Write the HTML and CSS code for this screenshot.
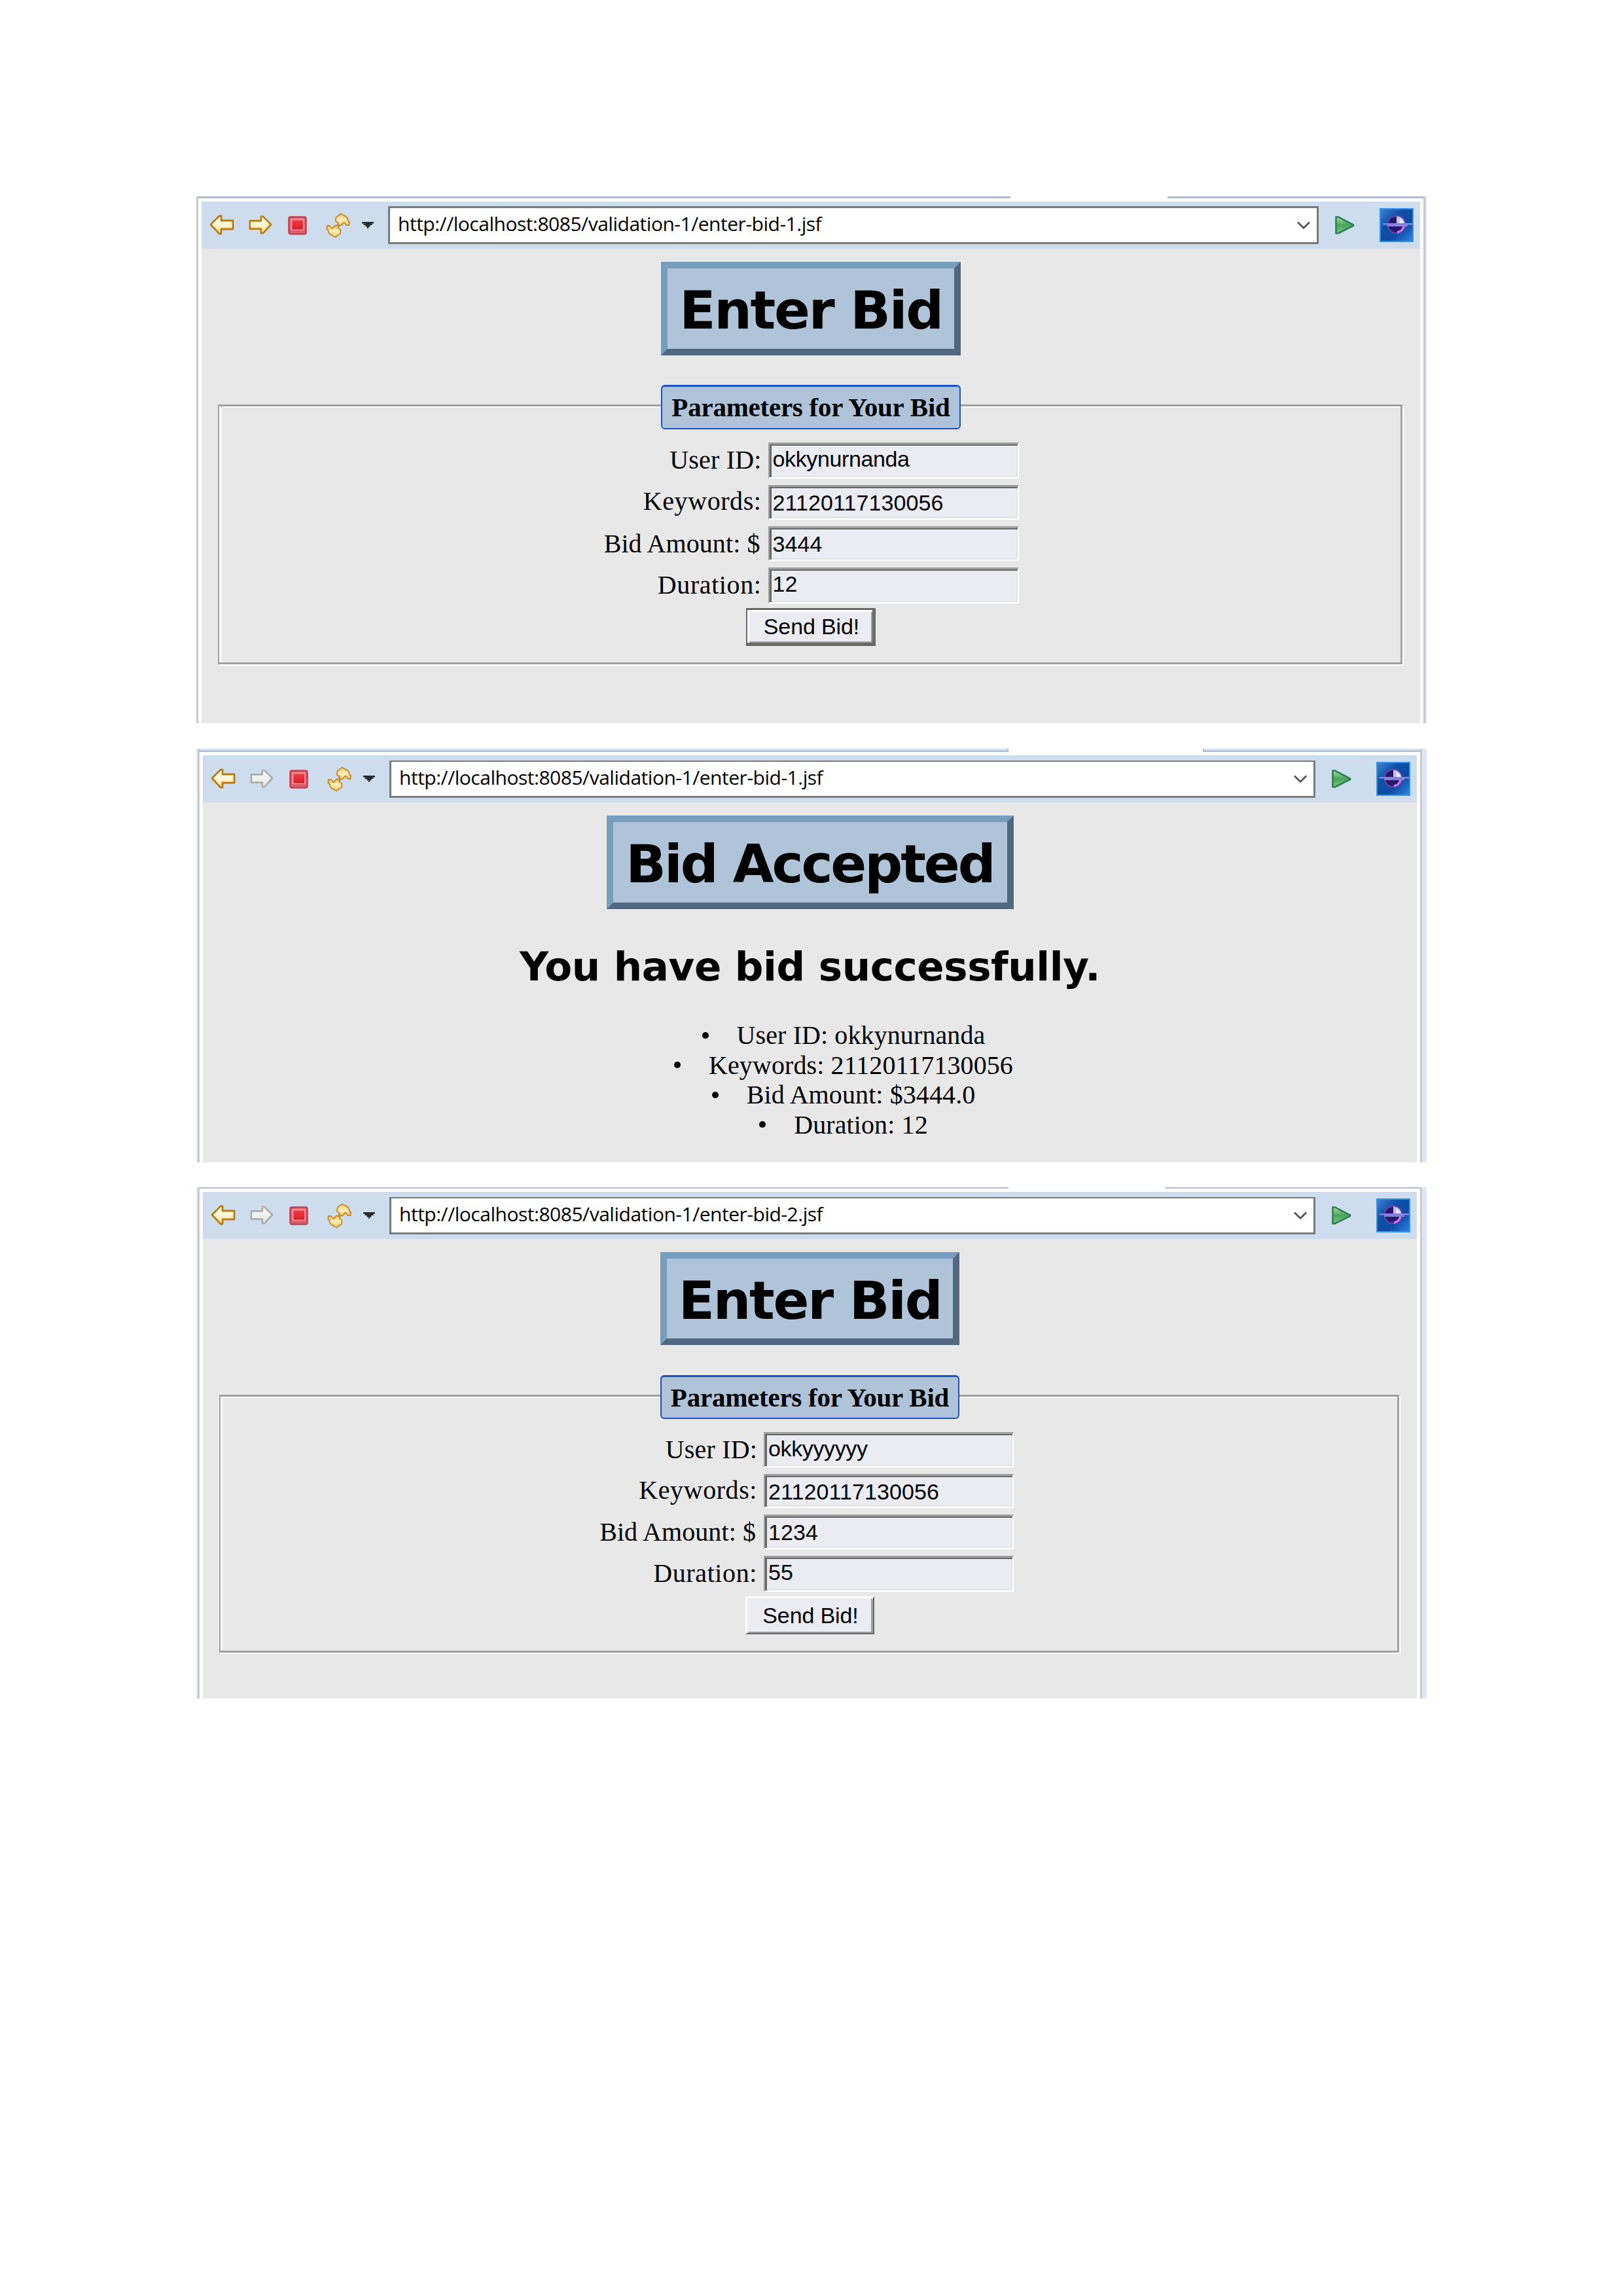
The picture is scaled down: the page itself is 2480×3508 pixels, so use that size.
FILE: index.html
```html
<!DOCTYPE html>
<html lang="en">
<head>
<meta charset="utf-8">
<title>Enter Bid</title>
<link rel="stylesheet" href="styles.css">
</head>
<body>
<svg class="sprite" aria-hidden="true">
  <defs>
    <linearGradient id="gold" x1="0" y1="0" x2="0" y2="1"><stop offset="0" stop-color="#fffef2"/><stop offset=".5" stop-color="#fff6d4"/><stop offset="1" stop-color="#fbe08c"/></linearGradient>
    <linearGradient id="swirl" x1="0" y1="0" x2="0" y2="1"><stop offset="0" stop-color="#f5cf7a"/><stop offset=".6" stop-color="#fdeebf"/><stop offset="1" stop-color="#f3bb45"/></linearGradient>
    <linearGradient id="gray" x1="0" y1="0" x2="0" y2="1"><stop offset="0" stop-color="#fdfdfd"/><stop offset="1" stop-color="#e4e4e4"/></linearGradient>
    <linearGradient id="red" x1="0" y1="0" x2="0" y2="1"><stop offset="0" stop-color="#ee3a40"/><stop offset=".6" stop-color="#e62a33"/><stop offset="1" stop-color="#c91f2a"/></linearGradient>
    <linearGradient id="green" x1="0" y1="0" x2="0" y2="1"><stop offset="0" stop-color="#b5dc8c"/><stop offset=".5" stop-color="#45a560"/><stop offset="1" stop-color="#7cc873"/></linearGradient>
    <linearGradient id="sky" x1="0" y1="0" x2="1" y2="1"><stop offset="0" stop-color="#3f7fd8"/><stop offset=".35" stop-color="#0f4fa8"/><stop offset=".65" stop-color="#0d4ca4"/><stop offset="1" stop-color="#2f82e0"/></linearGradient>
  </defs>
  <symbol id="back" viewBox="0 0 38 31"><path d="M2 15 15 2H18V9H36V22H18V29H15Z" fill="url(#gold)" stroke="#b97c12" stroke-width="2.8" stroke-linejoin="round"/></symbol>
  <symbol id="forward" viewBox="0 0 38 31"><path d="M36 15 23 2H20V9H2V22H20V29H23Z" fill="url(#gold)" stroke="#b97c12" stroke-width="2.8" stroke-linejoin="round"/></symbol>
  <symbol id="forward-off" viewBox="0 0 38 31"><path d="M36 15 23 2H20V9H2V22H20V29H23Z" fill="url(#gray)" stroke="#adadad" stroke-width="2.8" stroke-linejoin="round"/></symbol>
  <symbol id="stop" viewBox="0 0 29 29"><rect x="1.5" y="1.5" width="26" height="26" rx="2.5" fill="#d9606c" stroke="#bf4454" stroke-width="2.6"/><rect x="4" y="4" width="21" height="18" fill="#f18e94"/><rect x="6.500" y="6.500" width="16.500" height="14" fill="url(#red)"/></symbol>
  <symbol id="refresh" viewBox="0 0 38 39"><path d="M23 1.500 27 4C32 5.500 34 9 34 13L36 14 35.500 19 31.500 19 28 14.500 23 19.500 17.500 19 19 15.500 15 13 15.500 7 20 4Z" fill="url(#swirl)" stroke="#c68d2b" stroke-width="2" stroke-linejoin="round"/><path d="M23 1.500 27 4C32 5.500 34 9 34 13L36 14 35.500 19 31.500 19 28 14.500 23 19.500 17.500 19 19 15.500 15 13 15.500 7 20 4Z" transform="rotate(180 18.700 19.500)" fill="url(#swirl)" stroke="#c68d2b" stroke-width="2" stroke-linejoin="round"/></symbol>
  <symbol id="caret" viewBox="0 0 18 10"><path d="M0 0H18V2.500H15.500V5H12.500V7.500H10V10H8V7.500H5.500V5H2.500V2.500H0Z" fill="#2b2b2b"/></symbol>
  <symbol id="chevron" viewBox="0 0 20 13"><path d="M1 1.500 10 10.500 19 1.500" fill="none" stroke="#505050" stroke-width="2.6"/></symbol>
  <symbol id="play" viewBox="0 0 30 28"><path d="M1.500 1.500H5L28 13.500V15L5 26.500H1.500Z" fill="url(#green)" stroke="#2b8058" stroke-width="2.6"/></symbol>
  <symbol id="globe" viewBox="0 0 52 52"><rect width="52" height="52" fill="#2f95e4"/><rect x="2" y="2" width="48" height="48" fill="url(#sky)"/><circle cx="26" cy="25" r="14.500" fill="#5a4aa8"/><circle cx="25.500" cy="25" r="12" fill="#28166c"/><path d="M26 12.500A12.500 12.500 0 0 1 38.500 25H26Z" fill="#c3bfe6"/><path d="M31 15A12 12 0 0 1 37 24H31Z" fill="#eceaf6"/><path d="M37 27A12 12 0 0 1 27 37" fill="none" stroke="#cc74e8" stroke-width="3.500"/><path d="M5 23H50V25.500H43V28H12V25.500H5Z" fill="#8683dd"/></symbol>
</svg>

<main class="sheet">
  <div class="shot shot-a">
    <section class="browser">
      <div class="edge"><i class="edge-left"></i><i class="edge-right"></i></div>
      <nav class="toolbar">
        <svg class="ic back"><use href="#back"/></svg>
        <svg class="ic forward"><use href="#forward"/></svg>
        <svg class="ic stop"><use href="#stop"/></svg>
        <svg class="ic refresh"><use href="#refresh"/></svg>
        <svg class="ic caret"><use href="#caret"/></svg>
        <div class="url"><span class="address">http://localhost:8085/validation-1/enter-bid-1.jsf</span><svg class="chevron"><use href="#chevron"/></svg></div>
        <svg class="ic play"><use href="#play"/></svg>
        <svg class="ic globe"><use href="#globe"/></svg>
      </nav>
      <div class="content">
        <h1 class="title title-enter">Enter Bid</h1>
        <div class="group">
          <div class="legend">Parameters for Your Bid</div>
          <div class="form">
            <span class="label l-user">User ID:</span><span class="field first">okkynurnanda</span>
            <span class="label l-key">Keywords:</span><span class="field">21120117130056</span>
            <span class="label l-bid">Bid Amount: $</span><span class="field">3444</span>
            <span class="label l-dur">Duration:</span><span class="field last">12</span>
          </div>
          <div class="send send-active">Send Bid!</div>
        </div>
      </div>
    </section>
  </div>

  <div class="shot shot-b">
    <section class="browser">
      <div class="edge"><i class="edge-left"></i><i class="edge-right"></i></div>
      <nav class="toolbar">
        <svg class="ic back"><use href="#back"/></svg>
        <svg class="ic forward"><use href="#forward-off"/></svg>
        <svg class="ic stop"><use href="#stop"/></svg>
        <svg class="ic refresh"><use href="#refresh"/></svg>
        <svg class="ic caret"><use href="#caret"/></svg>
        <div class="url"><span class="address">http://localhost:8085/validation-1/enter-bid-1.jsf</span><svg class="chevron"><use href="#chevron"/></svg></div>
        <svg class="ic play"><use href="#play"/></svg>
        <svg class="ic globe"><use href="#globe"/></svg>
      </nav>
      <div class="content">
        <h1 class="title title-accepted">Bid Accepted</h1>
        <h2 class="message">You have bid successfully.</h2>
        <ul class="summary">
          <li><i class="dot"></i>User ID: okkynurnanda</li>
          <li><i class="dot"></i>Keywords: 21120117130056</li>
          <li><i class="dot"></i>Bid Amount: $3444.0</li>
          <li><i class="dot"></i>Duration: 12</li>
        </ul>
      </div>
    </section>
  </div>

  <div class="shot shot-c">
    <section class="browser">
      <div class="edge"><i class="edge-left"></i><i class="edge-right"></i></div>
      <nav class="toolbar">
        <svg class="ic back"><use href="#back"/></svg>
        <svg class="ic forward"><use href="#forward-off"/></svg>
        <svg class="ic stop"><use href="#stop"/></svg>
        <svg class="ic refresh"><use href="#refresh"/></svg>
        <svg class="ic caret"><use href="#caret"/></svg>
        <div class="url"><span class="address">http://localhost:8085/validation-1/enter-bid-2.jsf</span><svg class="chevron"><use href="#chevron"/></svg></div>
        <svg class="ic play"><use href="#play"/></svg>
        <svg class="ic globe"><use href="#globe"/></svg>
      </nav>
      <div class="content">
        <h1 class="title title-enter">Enter Bid</h1>
        <div class="group">
          <div class="legend">Parameters for Your Bid</div>
          <div class="form">
            <span class="label l-user">User ID:</span><span class="field first">okkyyyyyy</span>
            <span class="label l-key">Keywords:</span><span class="field">21120117130056</span>
            <span class="label l-bid">Bid Amount: $</span><span class="field">1234</span>
            <span class="label l-dur">Duration:</span><span class="field last">55</span>
          </div>
          <div class="send">Send Bid!</div>
        </div>
      </div>
    </section>
  </div>
</main>
</body>
</html>
```
FILE: styles.css
```css
* { box-sizing: border-box; }
body { margin: 0; background: #fff; color: #000; font-family: "Liberation Serif", serif; }
.sprite { position: absolute; width: 0; height: 0; }
.sheet { padding: 300px 300px 0; }

/* window captures */
.shot { background: #e0e6f6; padding: 0 7px 0 2px; }
.shot-a { height: 805px; padding: 0 2px 0 0; margin-bottom: 39px; }
.shot-b { height: 632px; margin-bottom: 38px; }
.shot-c { height: 781px; }

.browser { height: 100%; display: flex; flex-direction: column; background: #fff; border: solid #cacaca; border-width: 0 3px; padding: 0 5px; }
.edge { flex: none; display: flex; justify-content: space-between; height: 8px; margin: 0 -5px; }
.edge i { height: 3px; background: #b3bacf; }
.edge-left { width: 1241px; }
.edge-right { width: 391px; }
.shot-b .edge { height: 10px; }
.shot-b .edge i { height: 5px; background: #cedded; border-bottom: 2px solid #b3bacf; }
.shot-b .edge-left { width: 1236px; border-right: 2px solid #b3bacf; }
.shot-b .edge-right { width: 332px; border-left: 2px solid #b3bacf; }
.shot-c .edge { height: 7px; }
.shot-c .edge i { height: 2px; }
.shot-c .edge-left { width: 1236px; }
.shot-c .edge-right { width: 390px; }

/* toolbar */
.toolbar { flex: none; height: 72px; background: #cedded; display: flex; align-items: center; padding: 0 10px 0 12px; }
.ic { flex: none; display: block; }
.back { width: 38px; height: 31px; margin: 0 22px 2px 0; }
.forward { width: 36px; height: 31px; margin: 0 24px 2px 0; }
.stop { width: 29px; height: 29px; margin-right: 29px; }
.refresh { width: 38px; height: 39px; margin-right: 17px; }
.caret { width: 18px; height: 10px; margin-right: 22px; }
.url { flex: 1; height: 58px; background: #fff; border: 3px solid #7a7a7a; display: flex; align-items: center; justify-content: space-between; padding: 0 10px 0 12px; }
.address { font: 30px/44px "Open Sans", "Noto Sans", sans-serif; letter-spacing: -0.48px; padding-bottom: 5px; white-space: nowrap; }
.chevron { width: 20px; height: 13px; }
.play { width: 30px; height: 28px; margin: 0 38px 0 25px; }
.globe { width: 52px; height: 52px; }
.shot-b .url, .shot-c .url { height: 57px; border-top-width: 2px; margin-top: 1px; }

/* page content */
.content { flex: 1; min-height: 0; background: #e8e8e8; padding: 20px 25px 0; display: flex; flex-direction: column; align-items: center; }
.title { flex: none; margin: 0; height: 143px; padding-top: 3px; background: #afc4d8; border: 10px solid; border-color: #779dbf #506880 #506880 #779dbf; font: bold 81px/123px "DejaVu Sans", sans-serif; text-align: center; white-space: nowrap; }
.title-enter { width: 458px; letter-spacing: -2.29px; }
.title-accepted { width: 622px; letter-spacing: -3.05px; }
.message { margin: 48px 0 0; font: bold 61px/80px "DejaVu Sans", sans-serif; letter-spacing: -0.38px; white-space: nowrap; }

.group { align-self: stretch; height: 397px; margin: 75px 2px 0 0; padding-left: 3px; border: solid #a0a0a0; border-width: 3px 3px 3px 2px; box-shadow: 2px 2px 0 #fff, inset 3px 2px 0 #fff; display: flex; flex-direction: column; align-items: center; }
.legend { flex: none; width: 458px; height: 68px; margin-top: -33px; background: #afc4d8; border: 2px solid #1d53c0; border-top-width: 3px; border-radius: 6px; font: bold 41px/63px "Liberation Serif", serif; letter-spacing: -0.24px; text-align: center; white-space: nowrap; }
.form { width: 635px; margin-top: 20px; display: grid; grid-template-columns: 1fr 383px; grid-template-rows: 55px 53px 53px 55px; gap: 10px 12px; }
.label { margin-right: -2px; font-size: 40px; line-height: 53px; text-align: right; white-space: nowrap; }
.l-user { letter-spacing: 0.18px; }
.l-key { letter-spacing: 0.57px; line-height: 50px; }
.l-bid { letter-spacing: 0.08px; margin-right: 0; }
.l-dur { letter-spacing: 0.6px; }
.field { background: #eaecf2; border: solid; border-width: 3px 2px 2px; border-color: #a0a0a0 #fff #fff #a0a0a0; box-shadow: inset 3px 2px 0 #696969, inset -2px -2px 0 #e3e3e3; padding-left: 5px; font: 34px/48px "Liberation Sans", sans-serif; letter-spacing: 0.09px; white-space: nowrap; }
.first { letter-spacing: -0.37px; line-height: 44px; }
.last { line-height: 44px; }
.send { width: 198px; height: 58px; margin-top: 7px; padding-left: 2px; background: #eaecf2; border: solid; border-width: 2px; border-color: #fff #696969 #696969 #fff; box-shadow: inset 2px 2px 0 #f0f0f0, inset -3px -2px 0 #a0a0a0; font: 34px/54px "Liberation Sans", sans-serif; letter-spacing: -0.12px; text-align: center; white-space: nowrap; }
.send-active { padding-left: 5px; border-width: 3px 5px 5px 2px; border-color: #696969; box-shadow: inset 3px 3px 0 #fff, inset -2px -2px 0 #a0a0a0; line-height: 51px; }

.shot-c .title { width: 457px; height: 142px; }
.shot-c .group { height: 394px; margin-top: 76px; }
.shot-c .legend { width: 457px; height: 67px; }
.shot-c .form { width: 633px; margin-right: 10px; grid-template-columns: 1fr 382px; grid-template-rows: 54px 52px 53px 55px; row-gap: 10px; padding-top: 0; }
.shot-c .send { width: 197px; }

.summary { list-style: none; margin: 42px 0 0; padding: 0 0 0 103px; font-size: 40px; line-height: 45.5px; letter-spacing: 0.1px; }
.summary li { display: flex; align-items: center; justify-content: center; white-space: nowrap; }
.dot { width: 10px; height: 10px; border-radius: 50%; background: #000; margin-right: 43px; }
```
